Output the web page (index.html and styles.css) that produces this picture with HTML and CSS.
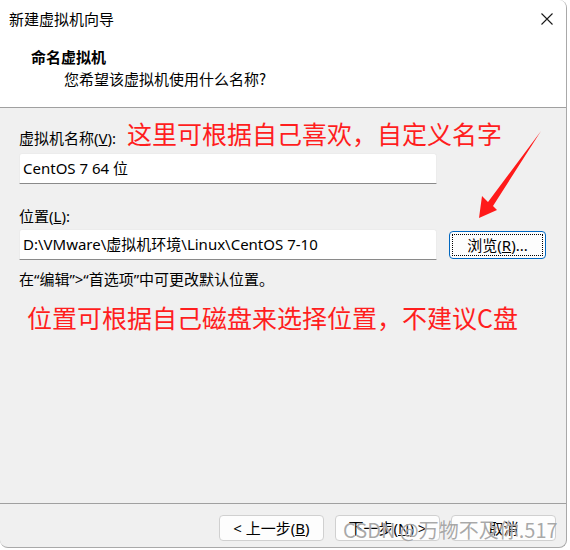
FILE: index.html
```html
<!DOCTYPE html>
<html lang="zh-CN">
<head>
<meta charset="utf-8">
<title>新建虚拟机向导</title>
<link rel="stylesheet" href="styles.css">
</head>
<body>
<div class="window">
  <div class="titlebar">
    <span class="title">新建虚拟机向导</span>
    <svg class="close" width="12" height="12" viewBox="0 0 12 12"><path d="M0.5 0.5 L11.5 11.5 M11.5 0.5 L0.5 11.5" stroke="#1a1a1a" stroke-width="1.1" fill="none"/></svg>
  </div>
  <div class="header">
    <div class="h-title">命名虚拟机</div>
    <div class="h-sub">您希望该虚拟机使用什么名称?</div>
  </div>
  <div class="content">
    <div class="row-name">
      <span class="label label-name">虚拟机名称(<u>V</u>):</span>
      <span class="note">这里可根据自己喜欢，自定义名字</span>
    </div>
    <div class="input input-name">CentOS 7 64 位</div>
    <div class="label label-loc">位置(<u>L</u>):</div>
    <div class="row-loc">
      <div class="input input-loc">D:\VMware\虚拟机环境\Linux\CentOS 7-10</div>
      <div class="btn btn-browse"><span class="focus">浏览(<u>R</u>)...</span></div>
    </div>
    <div class="hint">在“编辑”&gt;“首选项”中可更改默认位置。</div>
    <div class="note note2">位置可根据自己磁盘来选择位置，不建议C盘</div>
    <svg class="arrow" width="570" height="550" viewBox="0 0 570 550"><polygon points="479,219 482,197 488,203 541,132 493,207 497,211" fill="#ff1a1a"/></svg>
  </div>
  <div class="footer">
    <div class="btn">&lt; 上一步(<u>B</u>)</div>
    <div class="btn">下一步(<u>N</u>) &gt;</div>
    <div class="btn">取消</div>
  </div>
  <div class="watermark">CSDN @万物不及你.517</div>
</div>
</body>
</html>
```

FILE: styles.css
```css
html, body {
  margin: 0;
  padding: 0;
  background: #ffffff;
}
body {
  font-family: "Noto Sans", "Noto Sans CJK SC", sans-serif;
  font-size: 15px;
  color: #000;
}
.window {
  position: relative;
  width: 567px;
  height: 548px;
  box-sizing: border-box;
  border-right: 1px solid #a9a9a9;
  border-bottom: 1px solid #a9a9a9;
  border-radius: 0 8px 8px 8px;
  background: #f0f0f0;
  overflow: hidden;
  display: flex;
  flex-direction: column;
}
.titlebar {
  height: 38px;
  background: #fff;
  display: flex;
  align-items: center;
  justify-content: space-between;
  padding: 0 13px 0 9px;
  flex: none;
}
.title {
  line-height: 20px;
  font-family: "Noto Sans CJK SC", sans-serif;
}
.close {
  display: block;
}
.header {
  height: 70px;
  background: #fff;
  box-sizing: border-box;
  padding-top: 9px;
  border-bottom: 1px solid #a0a0a0;
  flex: none;
  font-family: "Noto Sans CJK SC", sans-serif;
}
.h-title {
  font-weight: bold;
  line-height: 20px;
  padding-left: 31px;
}
.h-sub {
  margin-top: 2px;
  line-height: 20px;
  padding-left: 64px;
}
.content {
  flex: 1;
  padding-left: 19px;
  position: relative;
}
.row-name {
  display: flex;
  align-items: flex-start;
  margin-top: 10px;
  height: 30px;
}
.label {
  line-height: 20px;
}
.label-name {
  margin-top: 10px;
  margin-right: 11px;
}
.note {
  color: #ff1e1e;
  font-family: "Noto Sans CJK SC", sans-serif;
  font-size: 25px;
  line-height: 30px;
  white-space: nowrap;
}
.input {
  width: 418px;
  height: 31px;
  box-sizing: border-box;
  background: #fff;
  border: 1px solid #ececec;
  border-bottom: 1px solid #8a8a8a;
  border-radius: 3px 3px 0 0;
  padding-left: 3px;
  line-height: 29px;
  white-space: nowrap;
  overflow: hidden;
}
.input-name {
  margin-top: 5px;
}
.label-loc {
  margin-top: 22px;
}
.row-loc {
  margin-top: 3px;
  display: flex;
  align-items: center;
  gap: 12px;
}
.btn {
  width: 105px;
  height: 26px;
  box-sizing: border-box;
  background: #fdfdfd;
  border: 1px solid #d0d0d0;
  border-radius: 4px;
  display: flex;
  align-items: center;
  justify-content: center;
  line-height: 20px;
  white-space: nowrap;
}
.btn-browse {
  width: 97px;
  height: 28px;
  border: 1px solid #0067c0;
  padding: 2px;
}
.focus {
  flex: 1;
  align-self: stretch;
  display: flex;
  align-items: center;
  justify-content: center;
  outline: 1px dotted #000;
  outline-offset: -1px;
}
.hint {
  margin-top: 9px;
  line-height: 20px;
}
.note2 {
  margin-top: 13px;
  margin-left: 8px;
}
.arrow {
  position: absolute;
  left: 0;
  top: -109px;
  pointer-events: none;
}
.footer {
  flex: none;
  height: 44px;
  box-sizing: border-box;
  border-top: 1px solid #a0a0a0;
  padding: 11px 10px 0 0;
  display: flex;
  justify-content: flex-end;
  gap: 11px;
}
.watermark {
  position: absolute;
  left: 343px;
  top: 517px;
  font-family: "Noto Sans CJK SC", sans-serif;
  font-size: 20px;
  line-height: 26px;
  color: rgba(110, 110, 110, 0.6);
  text-shadow: 0 0 1px #fff;
  white-space: nowrap;
}
```
